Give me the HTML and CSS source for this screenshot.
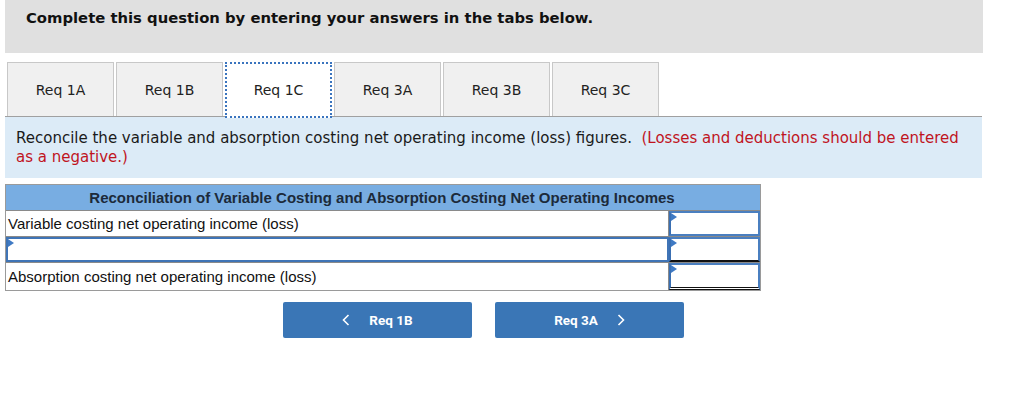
FILE: index.html
```html
<!DOCTYPE html>
<html>
<head>
<meta charset="utf-8">
<link rel="stylesheet" href="styles.css">
</head>
<body>
<div class="header">Complete this question by entering your answers in the tabs below.</div>
<div class="tabs">
  <div class="tab">Req 1A</div>
  <div class="tab">Req 1B</div>
  <div class="tab active">Req 1C</div>
  <div class="tab">Req 3A</div>
  <div class="tab">Req 3B</div>
  <div class="tab">Req 3C</div>
</div>
<div class="panel">Reconcile the variable and absorption costing net operating income (loss) figures.&nbsp; <span class="red">(Losses and deductions should be entered as a negative.)</span></div>
<div class="table">
  <div class="thead">Reconciliation of Variable Costing and Absorption Costing Net Operating Incomes</div>
  <div class="row">
    <div class="label">Variable costing net operating income (loss)</div>
    <div class="amt"><span class="tri"></span></div>
  </div>
  <div class="row">
    <div class="label input"><span class="tri"></span></div>
    <div class="amt under"><span class="tri"></span></div>
  </div>
  <div class="row">
    <div class="label">Absorption costing net operating income (loss)</div>
    <div class="amt double"><span class="tri"></span></div>
  </div>
</div>
<div class="nav">
  <div class="btn"><svg class="chev" width="8" height="12" viewBox="0 0 8 12"><path d="M6.5 1 L1.5 6 L6.5 11" fill="none" stroke="#fff" stroke-width="1.6"/></svg><span>Req 1B</span></div>
  <div class="btn"><span>Req 3A</span><svg class="chev" width="8" height="12" viewBox="0 0 8 12"><path d="M1.5 1 L6.5 6 L1.5 11" fill="none" stroke="#fff" stroke-width="1.6"/></svg></div>
</div>
</body>
</html>
```
FILE: styles.css
```css
body {
  margin: 0;
  font-family: Verdana, "DejaVu Sans", sans-serif;
  color: #1a1a1a;
  background: #fff;
}
.header {
  margin-left: 5px;
  width: 978px;
  height: 53px;
  box-sizing: border-box;
  padding: 9px 0 0 21px;
  background: #e0e0e0;
  font-weight: bold;
  font-size: 14.8px;
  color: #111;
}
.tabs {
  display: flex;
  gap: 2px;
  margin: 9px 0 0 7px;
  height: 54px;
}
.tab {
  width: 107px;
  box-sizing: border-box;
  height: 54px;
  border: 1px solid #c8c8c8;
  border-bottom: none;
  background: #f0f0f0;
  display: flex;
  align-items: center;
  justify-content: center;
  font-size: 14px;
  color: #222;
  padding-top: 1px;
}
.tab.active {
  height: 56px;
  background: #fff;
  border: 2px dotted #3a74be;
  position: relative;
  z-index: 1;
  padding-top: 0;
  padding-bottom: 1px;
}
.panel {
  margin-left: 5px;
  width: 977px;
  height: 62px;
  box-sizing: border-box;
  border-top: 1px solid #a0a0a0;
  background: #dcebf7;
  padding: 12px 11px 0 11px;
  font-size: 15px;
  line-height: 19px;
  color: #1a1a1a;
}
.red { color: #c0141e; }
.table {
  margin: 6px 0 0 5px;
  width: 754px;
  border: 1px solid #9a9a9a;
  font-family: "Liberation Sans", Arial, sans-serif;
  font-size: 15px;
}
.thead {
  height: 25px;
  background: #78ade2;
  border-bottom: 1px solid #8a8a8a;
  font-weight: bold;
  color: #1c2a3a;
  display: flex;
  align-items: center;
  justify-content: center;
  padding-right: 2px;
}
.row {
  display: flex;
  height: 25px;
  border-bottom: 1px solid #8a8a8a;
}
.row:last-child { border-bottom: none; height: 27px; }
.label {
  flex: 1;
  display: flex;
  align-items: center;
  padding-left: 2px;
  color: #111;
  border-right: 1px solid #8a8a8a;
  position: relative;
}
.label.input {
  border: 2px solid #3f74b6;
}
.amt {
  width: 91px;
  box-sizing: border-box;
  border: 2px solid #4a7fc0;
  border-left-color: #3a6fb2;
  position: relative;
}
.amt.under { border-bottom: 2px solid #111; }
.amt.double {
  border-bottom: 3px double #111;
}
.tri {
  position: absolute;
  left: 0;
  top: 0;
  width: 0;
  height: 0;
  border-top: 4px solid transparent;
  border-bottom: 4px solid transparent;
  border-left: 6px solid #3f7ac4;
}
.nav {
  display: flex;
  gap: 23px;
  margin: 11px 0 0 283px;
}
.btn {
  width: 189px;
  height: 36px;
  background: #3a76b6;
  border-radius: 2px;
  display: flex;
  align-items: center;
  justify-content: center;
  gap: 19px;
  color: #fff;
  font-family: Roboto, "Liberation Sans", sans-serif;
  font-weight: bold;
  font-size: 13.5px;
}
.chev { display: block; }
```
